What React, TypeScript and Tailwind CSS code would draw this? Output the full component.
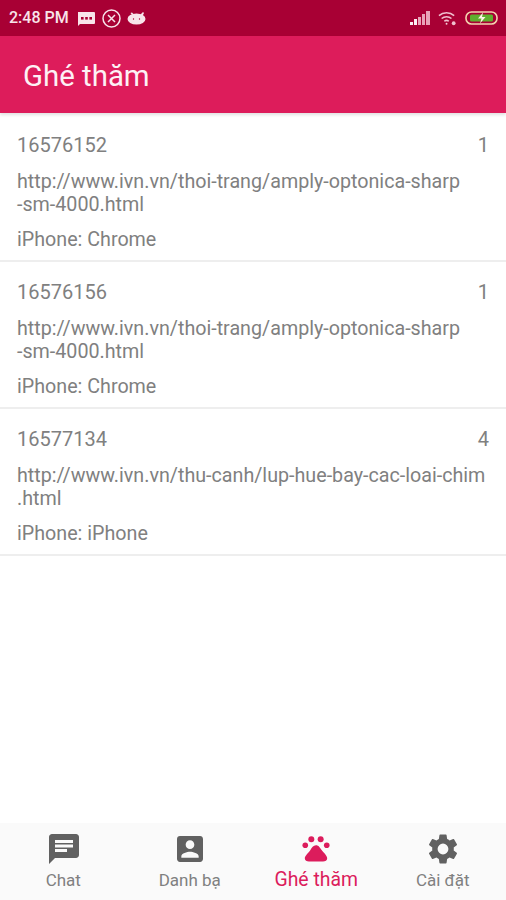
import type { ReactNode } from "react";

const visits = [
  { id: "16576152", count: 1, url: ["http://www.ivn.vn/thoi-trang/amply-optonica-sharp", "-sm-4000.html"], device: "iPhone: Chrome" },
  { id: "16576156", count: 1, url: ["http://www.ivn.vn/thoi-trang/amply-optonica-sharp", "-sm-4000.html"], device: "iPhone: Chrome" },
  { id: "16577134", count: 4, url: ["http://www.ivn.vn/thu-canh/lup-hue-bay-cac-loai-chim", ".html"], device: "iPhone: iPhone" },
];

function StatusIcons() {
  return (
    <div className="flex items-center gap-[6px]">
      <svg width="19" height="15" viewBox="0 0 19 15" fill="#f8e4ea">
        <path d="M1 1h16a1 1 0 0 1 1 1v10a1 1 0 0 1-1 1H1z" />
        <path d="M1 12v3l3-3z" />
        <rect x="4" y="6" width="2.600" height="2.600" fill="#a80034" />
        <rect x="8.200" y="6" width="2.600" height="2.600" fill="#a80034" />
        <rect x="12.400" y="6" width="2.600" height="2.600" fill="#a80034" />
      </svg>
      <svg width="19" height="19" viewBox="0 0 19 19" fill="none" stroke="#f8e4ea" strokeWidth="1.500">
        <circle cx="9.500" cy="9.500" r="8.500" />
        <path d="M6 6l7 7M13 6l-7 7" />
      </svg>
      <svg width="19" height="14" viewBox="0 0 19 14" fill="#f8e4ea">
        <ellipse cx="9.500" cy="8" rx="9" ry="5.500" />
        <path d="M13 4l3-3 1 1-2 4z" />
        <path d="M5 4L3.500 2 5 1.500 7 3.500z" />
        <circle cx="6.500" cy="8" r="0.700" fill="#a80034" />
        <circle cx="12.500" cy="8" r="0.700" fill="#a80034" />
      </svg>
    </div>
  );
}

function SystemIcons() {
  return (
    <div className="flex items-center gap-[8px]">
      <svg width="20" height="14" viewBox="0 0 20 14" fill="#e9a3b8">
        <rect x="0" y="11" width="3" height="3" fill="#fbeef2" />
        <rect x="4" y="8" width="3" height="6" fill="#fbeef2" />
        <rect x="8" y="6" width="3" height="8" />
        <rect x="12" y="3" width="3" height="11" />
        <rect x="16" y="0" width="4" height="14" />
      </svg>
      <svg width="19" height="15" viewBox="0 0 20 15" fill="none" stroke="#f0c0cf" strokeWidth="1.600">
        <path d="M1 4.500a12 12 0 0 1 16 0" />
        <path d="M3.800 7.500a8 8 0 0 1 10.400 0" />
        <path d="M6.600 10.400a4 4 0 0 1 4.800 0" />
        <circle cx="9" cy="13" r="1" fill="#f5cdd8" stroke="none" />
        <circle cx="16.500" cy="12.500" r="2" fill="#f0c0cf" stroke="none" />
      </svg>
      <svg width="33" height="14" viewBox="0 0 33 14">
        <rect x="1" y="1" width="31" height="12" rx="5.500" fill="#a80034" stroke="#f4d2ae" strokeWidth="1.600" />
        <rect x="5" y="3.500" width="23" height="7" rx="1.500" fill="#5fae2e" />
        <path d="M18 1.500l-5 6h3.500l-1.500 5 5.500-6.500H17z" fill="#fdf3e6" />
      </svg>
    </div>
  );
}

function NavItem({ icon, label, active }: { icon: ReactNode; label: string; active?: boolean }) {
  return (
    <div className="flex flex-1 flex-col items-center">
      <div className="flex h-[32px] items-center">{icon}</div>
      <span className={active ? "mt-[3px] text-[19.400px] leading-[24px] text-[#dc1c5c]" : "mt-[4px] text-[17px] leading-[22px] text-[#808080]"}>
        {label}
      </span>
    </div>
  );
}

export default function App() {
  return (
    <div className="flex h-[900px] w-[506px] flex-col bg-white font-['Roboto',sans-serif]">
      <div className="flex h-[36px] items-center justify-between bg-[#a80034] pl-[9px] pr-[8px]">
        <div className="flex items-center gap-[8px]">
          <span className="text-[16px] font-medium text-[#f8e4ea]">2:48 PM</span>
          <StatusIcons />
        </div>
        <SystemIcons />
      </div>

      <div className="flex h-[77px] items-center bg-[#dd1c5b] pl-[23px] shadow-[0_2px_3px_rgba(0,0,0,0.12)]">
        <h1 className="pt-[3px] text-[29.400px] text-[#fdf1f5]">Ghé thăm</h1>
      </div>

      <div className="flex-1 pt-[2px]">
        {visits.map((v) => (
          <div key={v.id} className="h-[147px] border-b-2 border-[#eeeeee] px-[17px] pt-[17px] text-[#808080]">
            <div className="flex justify-between text-[20px] leading-[26px]">
              <span>{v.id}</span>
              <span>{v.count}</span>
            </div>
            <div className="mt-[12px] text-[19.700px] leading-[23px]">
              {v.url.map((line) => (
                <div key={line}>{line}</div>
              ))}
            </div>
            <div className="mt-[11px] text-[19.700px] leading-[26px]">{v.device}</div>
          </div>
        ))}
      </div>

      <div className="flex h-[77px] bg-[#fafafa] pt-[10px]">
        <NavItem
          label="Chat"
          icon={
            <svg width="30" height="30" viewBox="2 2 20 20" fill="#616161" className="ml-[2px]">
              <path d="M20 2H4c-1.100 0-2 .9-2 2v18l4-4h14c1.100 0 2-.9 2-2V4c0-1.100-.9-2-2-2zM6 9h12v2H6V9zm8 5H6v-2h8v2zm4-6H6V6h12v2z" />
            </svg>
          }
        />
        <NavItem
          label="Danh bạ"
          icon={
            <svg width="26" height="26" viewBox="3 3 18 18" fill="#616161">
              <path d="M3 5v14c0 1.100.89 2 2 2h14c1.100 0 2-.9 2-2V5c0-1.100-.9-2-2-2H5c-1.110 0-2 .9-2 2zm12 4c0 1.660-1.340 3-3 3s-3-1.340-3-3 1.340-3 3-3 3 1.340 3 3zm-9 8c0-2 4-3.100 6-3.100s6 1.100 6 3.100v1H6v-1z" />
            </svg>
          }
        />
        <NavItem
          active
          label="Ghé thăm"
          icon={
            <svg width="28" height="28" viewBox="0 0 30 28" fill="#dc1c5c">
              <circle cx="3.500" cy="10" r="3" />
              <circle cx="10" cy="3.500" r="3.200" />
              <circle cx="20" cy="3.500" r="3.200" />
              <circle cx="26.500" cy="10" r="3" />
              <path d="M15 10c-3 0-4.500 2.500-6 5S3 21 3 24c0 2.500 2 3.500 4.500 3.500h15c2.500 0 4.500-1 4.500-3.500 0-3-4-6.500-6-9S18 10 15 10z" />
            </svg>
          }
        />
        <NavItem
          label="Cài đặt"
          icon={
            <svg width="30" height="30" viewBox="2 2 20 20" fill="#616161">
              <path d="M19.140 12.940c.04-.3.06-.61.06-.94s-.02-.64-.07-.94l2.030-1.580a.49.49 0 0 0 .12-.61l-1.920-3.320a.49.49 0 0 0-.59-.22l-2.390.96a7.030 7.030 0 0 0-1.620-.94l-.36-2.540a.48.48 0 0 0-.48-.41h-3.840c-.24 0-.43.17-.47.41l-.36 2.540c-.59.24-1.130.57-1.620.94l-2.390-.96a.49.49 0 0 0-.59.22L2.740 8.870c-.12.21-.08.47.12.61l2.030 1.580c-.05.3-.09.63-.09.94s.02.64.07.94l-2.030 1.580a.49.49 0 0 0-.12.61l1.920 3.320c.12.22.37.29.59.22l2.390-.96c.5.38 1.030.7 1.620.94l.36 2.540c.05.24.24.41.48.41h3.840c.24 0 .44-.17.47-.41l.36-2.540c.59-.24 1.130-.56 1.620-.94l2.390.96c.22.08.47 0 .59-.22l1.920-3.320c.12-.22.07-.47-.12-.61l-2.010-1.580zM12 15.600A3.600 3.600 0 1 1 12 8.400a3.600 3.600 0 0 1 0 7.200z" />
            </svg>
          }
        />
      </div>
    </div>
  );
}
